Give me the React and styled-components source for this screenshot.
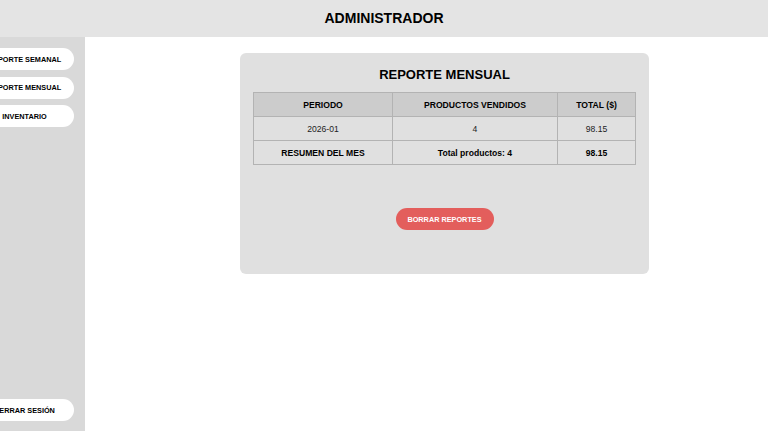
import React from "react";
import styled, { createGlobalStyle } from "styled-components";

const GlobalStyle = createGlobalStyle`
  * {
    box-sizing: border-box;
  }
  html, body {
    margin: 0;
    padding: 0;
    height: 100%;
    overflow: hidden;
    background: #ffffff;
    font-family: "Liberation Sans", Arial, sans-serif;
    color: #000;
  }
`;

const reportRows = [{ periodo: "2026-01", productos: 4, total: "98.15" }];

const App = () => {
  return (
    <>
      <GlobalStyle />
      <Header>
        <Title>ADMINISTRADOR</Title>
      </Header>
      <Body>
        <Sidebar>
          <NavButton>REPORTE SEMANAL</NavButton>
          <NavButton>REPORTE MENSUAL</NavButton>
          <NavButton>INVENTARIO</NavButton>
          <LogoutButton>CERRAR SESIÓN</LogoutButton>
        </Sidebar>
        <Main>
          <Card>
            <CardTitle>REPORTE MENSUAL</CardTitle>
            <Table>
              <colgroup>
                <col style={{ width: "139px" }} />
                <col style={{ width: "165px" }} />
                <col />
              </colgroup>
              <thead>
                <tr>
                  <Th>PERIODO</Th>
                  <Th>PRODUCTOS VENDIDOS</Th>
                  <Th>TOTAL ($)</Th>
                </tr>
              </thead>
              <tbody>
                {reportRows.map((row) => (
                  <tr key={row.periodo}>
                    <Td>{row.periodo}</Td>
                    <Td>{row.productos}</Td>
                    <Td>{row.total}</Td>
                  </tr>
                ))}
                <tr>
                  <Td $bold>RESUMEN DEL MES</Td>
                  <Td $bold>Total productos: 4</Td>
                  <Td $bold>98.15</Td>
                </tr>
              </tbody>
            </Table>
            <Actions>
              <DangerButton>BORRAR REPORTES</DangerButton>
            </Actions>
          </Card>
        </Main>
      </Body>
    </>
  );
};

const Header = styled.header`
  height: 37px;
  background: #e4e4e4;
  display: flex;
  align-items: center;
  justify-content: center;
  padding-bottom: 2px;
`;

const Title = styled.h1`
  margin: 0;
  font-size: 14px;
  font-weight: bold;
  color: #000;
`;

const Body = styled.div`
  display: flex;
  height: calc(100vh - 37px);
`;

const Sidebar = styled.aside`
  width: 85px;
  flex-shrink: 0;
  background: #d9d9d9;
  display: flex;
  flex-direction: column;
  align-items: flex-end;
  gap: 6.5px;
  padding: 11px 11px 10px 0;
`;

const NavButton = styled.button`
  width: 99px;
  height: 22px;
  flex-shrink: 0;
  border: none;
  border-radius: 11px;
  background: #ffffff;
  color: #000;
  font-family: "Liberation Sans", Arial, sans-serif;
  font-size: 7.3px;
  font-weight: bold;
  text-align: center;
  padding: 0;
  cursor: pointer;
`;

const LogoutButton = styled(NavButton)`
  margin-top: auto;
`;

const Main = styled.main`
  flex: 1;
  display: flex;
  justify-content: center;
  align-items: flex-start;
  padding: 16px 0 0 36px;
`;

const Card = styled.section`
  width: 409px;
  background: #e0e0e0;
  border-radius: 6px;
  padding: 14px 13px 44px;
`;

const CardTitle = styled.h2`
  margin: 0 0 10px;
  font-size: 13px;
  line-height: 15px;
  font-weight: bold;
  text-align: center;
  color: #000;
`;

const Table = styled.table`
  width: 100%;
  border-collapse: collapse;
  table-layout: fixed;
  font-size: 8.6px;
`;

const Th = styled.th`
  height: 24px;
  background: #cccccc;
  border: 1px solid #b3b3b3;
  font-weight: bold;
  text-align: center;
  color: #000;
  padding: 0 4px;
`;

const Td = styled.td`
  height: 24px;
  border: 1px solid #b3b3b3;
  text-align: center;
  font-weight: ${(p) => (p.$bold ? "bold" : "normal")};
  color: ${(p) => (p.$bold ? "#000" : "#222")};
  padding: 0 4px;
`;

const Actions = styled.div`
  display: flex;
  justify-content: center;
  margin-top: 43px;
`;

const DangerButton = styled.button`
  width: 98px;
  height: 22px;
  border: none;
  border-radius: 11px;
  background: #e35e5c;
  color: #ffffff;
  font-family: "Liberation Sans", Arial, sans-serif;
  font-size: 7.3px;
  font-weight: bold;
  padding: 0;
  cursor: pointer;
`;

export default App;
